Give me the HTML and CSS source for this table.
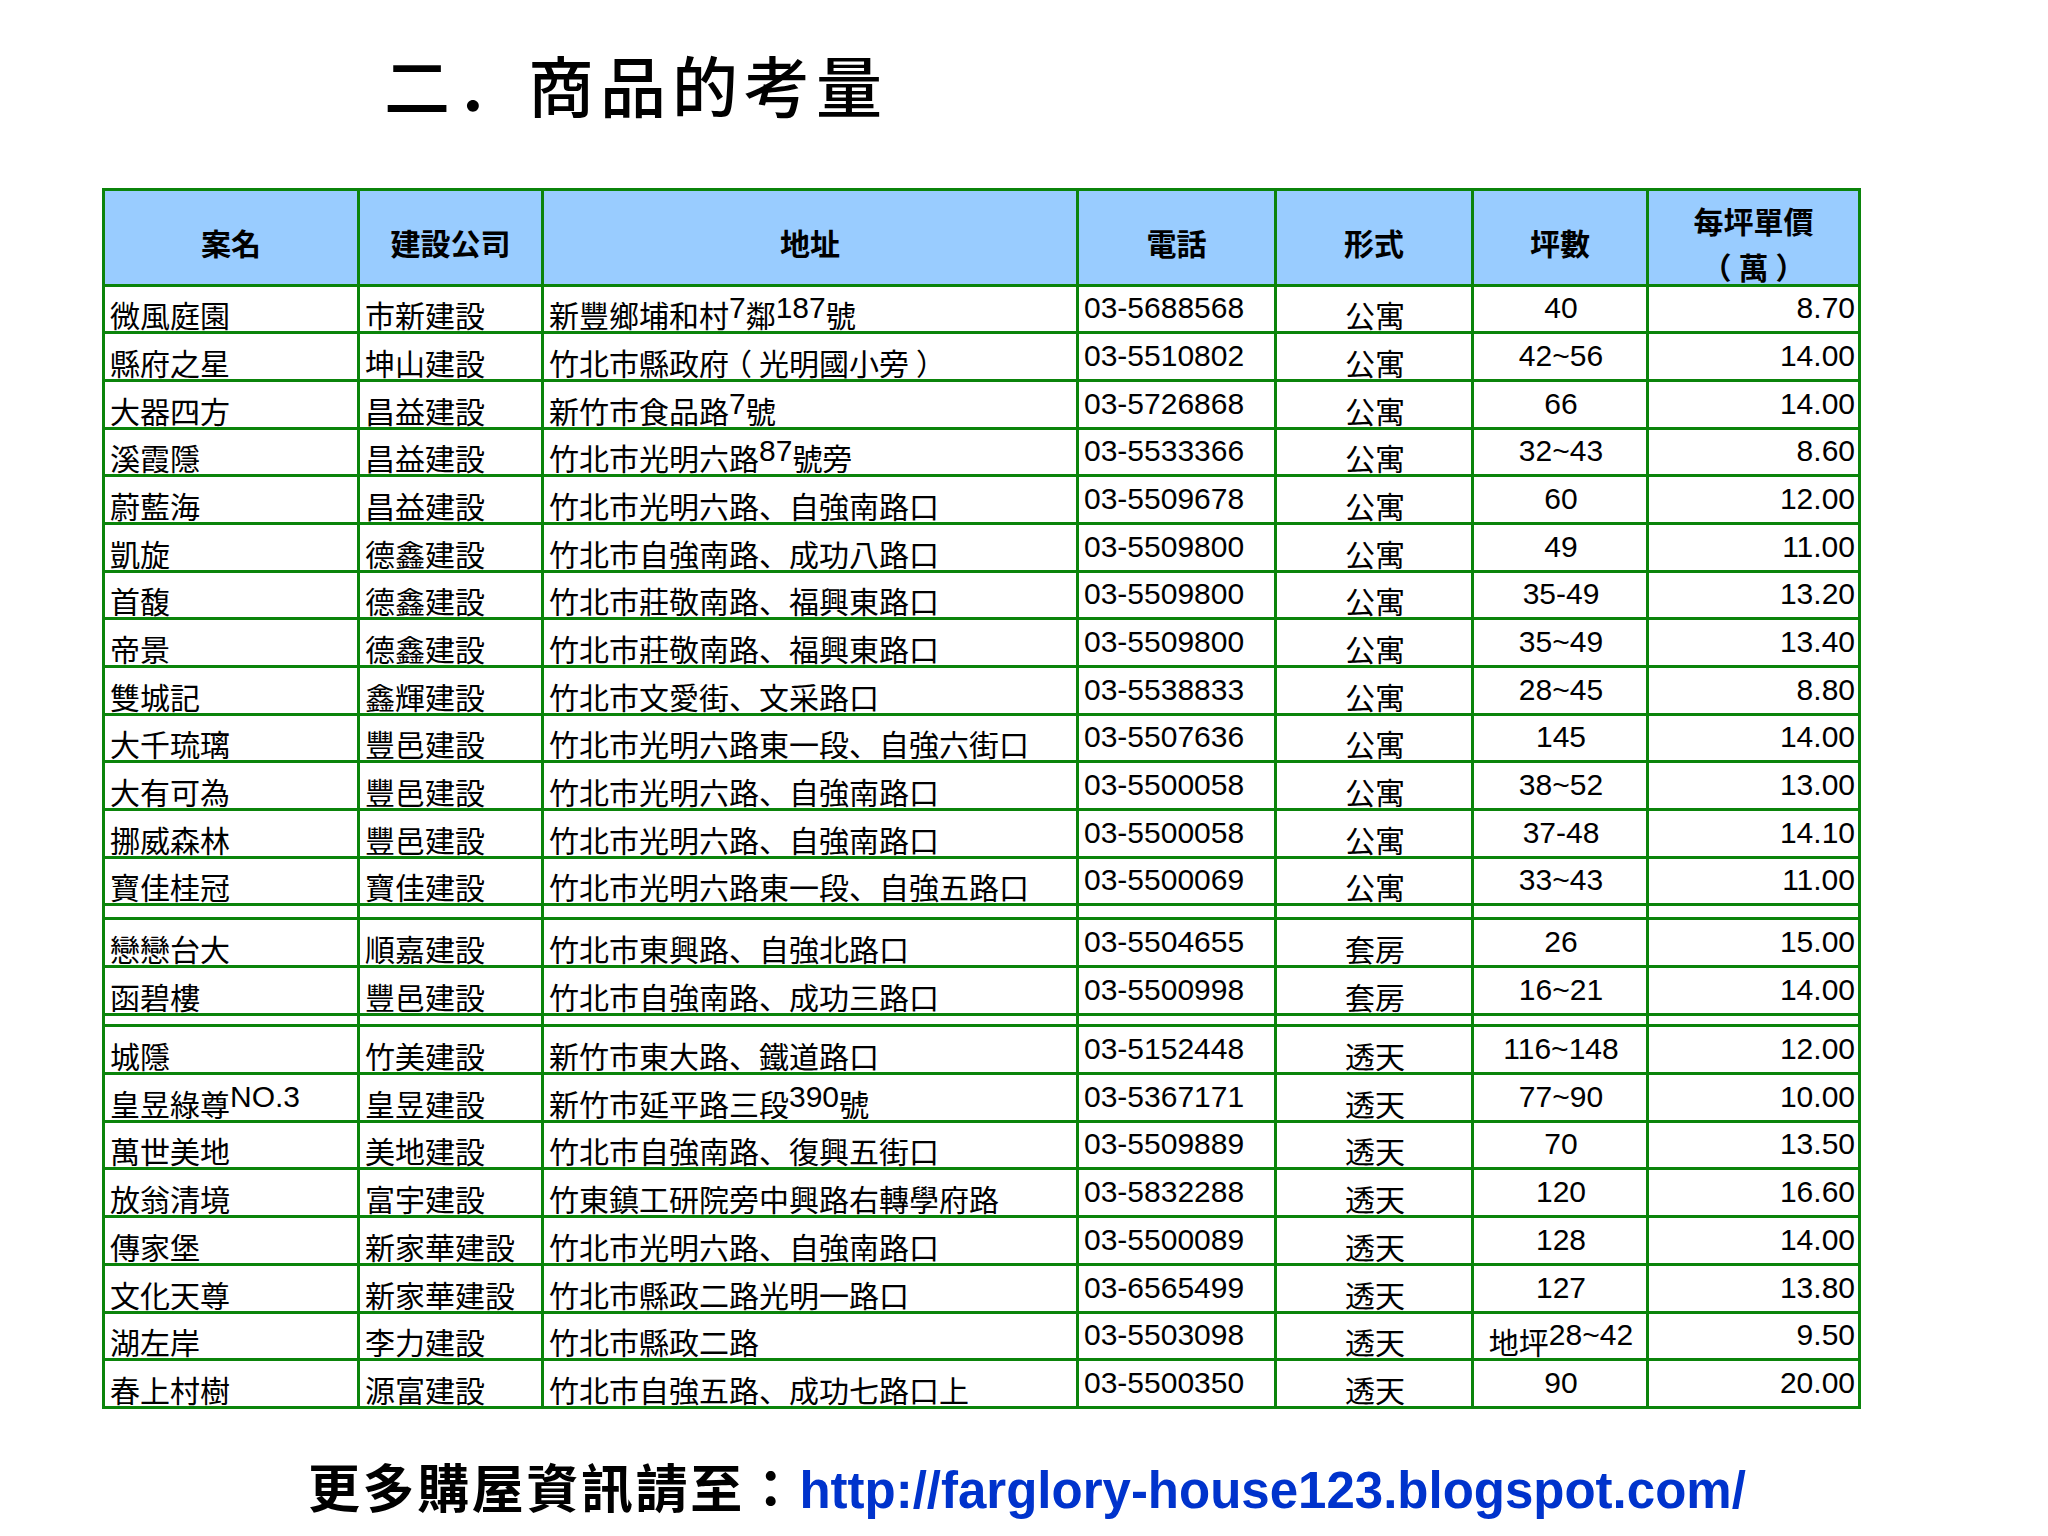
FILE: index.html
```html
<!DOCTYPE html>
<html lang="zh-Hant">
<head>
<meta charset="utf-8">
<title>商品的考量</title>
<link rel="stylesheet" href="styles.css">
</head>
<body>
<div class="page">
  <h1 class="title" lang="ja">二．商品的考量</h1>
  <table class="grid" lang="ja">
    <colgroup>
      <col class="c-name"><col class="c-co"><col class="c-addr"><col class="c-tel"><col class="c-type"><col class="c-size"><col class="c-price">
    </colgroup>
    <thead>
      <tr class="head">
        <th><div class="hd">案名</div></th>
        <th><div class="hd">建設公司</div></th>
        <th><div class="hd">地址</div></th>
        <th><div class="hd">電話</div></th>
        <th><div class="hd">形式</div></th>
        <th><div class="hd">坪數</div></th>
        <th><div class="hd two">每坪單價<br><span class="po">（</span>萬<span class="pc">）</span></div></th>
      </tr>
    </thead>
    <tbody>
      <tr class="r"><td>微風庭園</td><td>市新建設</td><td>新豐鄉埔和村<span class="n">7</span>鄰<span class="n">187</span>號</td><td class="num">03-5688568</td><td class="ctr">公寓</td><td class="num ctr">40</td><td class="num rt">8.70</td></tr>
      <tr class="r"><td>縣府之星</td><td>坤山建設</td><td>竹北市縣政府<span class="po">（</span>光明國小旁<span class="pc">）</span></td><td class="num">03-5510802</td><td class="ctr">公寓</td><td class="num ctr">42~56</td><td class="num rt">14.00</td></tr>
      <tr class="r"><td>大器四方</td><td>昌益建設</td><td>新竹市食品路<span class="n">7</span>號</td><td class="num">03-5726868</td><td class="ctr">公寓</td><td class="num ctr">66</td><td class="num rt">14.00</td></tr>
      <tr class="r"><td>溪霞隱</td><td>昌益建設</td><td>竹北市光明六路<span class="n">87</span>號旁</td><td class="num">03-5533366</td><td class="ctr">公寓</td><td class="num ctr">32~43</td><td class="num rt">8.60</td></tr>
      <tr class="r"><td>蔚藍海</td><td>昌益建設</td><td>竹北市光明六路、自強南路口</td><td class="num">03-5509678</td><td class="ctr">公寓</td><td class="num ctr">60</td><td class="num rt">12.00</td></tr>
      <tr class="r"><td>凱旋</td><td>德鑫建設</td><td>竹北市自強南路、成功八路口</td><td class="num">03-5509800</td><td class="ctr">公寓</td><td class="num ctr">49</td><td class="num rt">11.00</td></tr>
      <tr class="r"><td>首馥</td><td>德鑫建設</td><td>竹北市莊敬南路、福興東路口</td><td class="num">03-5509800</td><td class="ctr">公寓</td><td class="num ctr">35-49</td><td class="num rt">13.20</td></tr>
      <tr class="r"><td>帝景</td><td>德鑫建設</td><td>竹北市莊敬南路、福興東路口</td><td class="num">03-5509800</td><td class="ctr">公寓</td><td class="num ctr">35~49</td><td class="num rt">13.40</td></tr>
      <tr class="r"><td>雙城記</td><td>鑫輝建設</td><td>竹北市文愛街、文采路口</td><td class="num">03-5538833</td><td class="ctr">公寓</td><td class="num ctr">28~45</td><td class="num rt">8.80</td></tr>
      <tr class="r"><td>大千琉璃</td><td>豐邑建設</td><td>竹北市光明六路東一段、自強六街口</td><td class="num">03-5507636</td><td class="ctr">公寓</td><td class="num ctr">145</td><td class="num rt">14.00</td></tr>
      <tr class="r"><td>大有可為</td><td>豐邑建設</td><td>竹北市光明六路、自強南路口</td><td class="num">03-5500058</td><td class="ctr">公寓</td><td class="num ctr">38~52</td><td class="num rt">13.00</td></tr>
      <tr class="r"><td>挪威森林</td><td>豐邑建設</td><td>竹北市光明六路、自強南路口</td><td class="num">03-5500058</td><td class="ctr">公寓</td><td class="num ctr">37-48</td><td class="num rt">14.10</td></tr>
      <tr class="r"><td>寶佳桂冠</td><td>寶佳建設</td><td>竹北市光明六路東一段、自強五路口</td><td class="num">03-5500069</td><td class="ctr">公寓</td><td class="num ctr">33~43</td><td class="num rt">11.00</td></tr>
      <tr class="sp1"><td></td><td></td><td></td><td></td><td></td><td></td><td></td></tr>
      <tr class="r2"><td>戀戀台大</td><td>順嘉建設</td><td>竹北市東興路、自強北路口</td><td class="num">03-5504655</td><td class="ctr">套房</td><td class="num ctr">26</td><td class="num rt">15.00</td></tr>
      <tr class="r2"><td>函碧樓</td><td>豐邑建設</td><td>竹北市自強南路、成功三路口</td><td class="num">03-5500998</td><td class="ctr">套房</td><td class="num ctr">16~21</td><td class="num rt">14.00</td></tr>
      <tr class="sp2"><td></td><td></td><td></td><td></td><td></td><td></td><td></td></tr>
      <tr class="r"><td>城隱</td><td>竹美建設</td><td>新竹市東大路、鐵道路口</td><td class="num">03-5152448</td><td class="ctr">透天</td><td class="num ctr">116~148</td><td class="num rt">12.00</td></tr>
      <tr class="r"><td>皇昱綠尊<span class="n">NO.3</span></td><td>皇昱建設</td><td>新竹市延平路三段<span class="n">390</span>號</td><td class="num">03-5367171</td><td class="ctr">透天</td><td class="num ctr">77~90</td><td class="num rt">10.00</td></tr>
      <tr class="r"><td>萬世美地</td><td>美地建設</td><td>竹北市自強南路、復興五街口</td><td class="num">03-5509889</td><td class="ctr">透天</td><td class="num ctr">70</td><td class="num rt">13.50</td></tr>
      <tr class="r"><td>放翁清境</td><td>富宇建設</td><td>竹東鎮工研院旁中興路右轉學府路</td><td class="num">03-5832288</td><td class="ctr">透天</td><td class="num ctr">120</td><td class="num rt">16.60</td></tr>
      <tr class="r"><td>傳家堡</td><td>新家華建設</td><td>竹北市光明六路、自強南路口</td><td class="num">03-5500089</td><td class="ctr">透天</td><td class="num ctr">128</td><td class="num rt">14.00</td></tr>
      <tr class="r"><td>文化天尊</td><td>新家華建設</td><td>竹北市縣政二路光明一路口</td><td class="num">03-6565499</td><td class="ctr">透天</td><td class="num ctr">127</td><td class="num rt">13.80</td></tr>
      <tr class="r"><td>湖左岸</td><td>李力建設</td><td>竹北市縣政二路</td><td class="num">03-5503098</td><td class="ctr">透天</td><td class="ctr">地坪<span class="n">28~42</span></td><td class="num rt">9.50</td></tr>
      <tr class="r"><td>春上村樹</td><td>源富建設</td><td>竹北市自強五路、成功七路口上</td><td class="num">03-5500350</td><td class="ctr">透天</td><td class="num ctr">90</td><td class="num rt">20.00</td></tr>
    </tbody>
  </table>
  <p class="foot">更多購屋資訊請至：<span class="url">http://farglory-house123.blogspot.com/</span></p>
</div>
</body>
</html>
```

FILE: styles.css
```css
html, body {
  margin: 0;
  padding: 0;
  background: #ffffff;
}

body {
  width: 2048px;
  height: 1536px;
  overflow: hidden;
  font-family: "Noto Sans CJK TC", "Liberation Sans", sans-serif;
  color: #000000;
}

.page {
  padding-top: 50px;
}

.title {
  margin: 0 0 72px 0;
  padding-left: 384px;
  height: 66px;
  font-family: "Noto Sans CJK JP", "Noto Sans CJK TC", sans-serif;
  font-size: 66px;
  line-height: 66px;
  font-weight: 500;
  letter-spacing: 6px;
  white-space: nowrap;
}

.grid {
  margin-left: 102px;
  width: 1759px;
  table-layout: fixed;
  border-collapse: separate;
  border-spacing: 0;
  border-top: 3px solid #0b840b;
  border-left: 3px solid #0b840b;
  font-family: "Noto Sans CJK JP", "Noto Sans CJK TC", sans-serif;
}

.c-name  { width: 255px; }
.c-co    { width: 184px; }
.c-addr  { width: 535px; }
.c-tel   { width: 198px; }
.c-type  { width: 197px; }
.c-size  { width: 175px; }
.c-price { width: 212px; }

.head { height: 95.5px; }
.r    { height: 47.7px; }
.r2   { height: 48.1px; }
.sp1  { height: 13.5px; }
.sp2  { height: 11.3px; }

th, td {
  border-right: 3px solid #0b840b;
  border-bottom: 3px solid #0b840b;
  font-size: 30px;
  line-height: 30px;
  white-space: nowrap;
}

th {
  padding: 0;
  background: #99ccff;
  font-weight: 700;
  text-align: center;
  vertical-align: top;
}

.hd {
  height: 92.5px;
  box-sizing: border-box;
  padding-top: 33px;
  line-height: 36px;
}

.hd.two {
  padding-top: 6px;
  line-height: 46px;
}

td {
  padding: 0 3px 2px 5px;
  font-weight: 400;
  text-align: left;
  vertical-align: bottom;
}

td.num {
  font-family: "Liberation Sans", Arial, sans-serif;
  padding-bottom: 8px;
}

td.ctr { text-align: center; }
td.rt  { text-align: right; }

.n {
  font-family: "Liberation Sans", Arial, sans-serif;
  vertical-align: 9px;
}

/* full-width parentheses set half-width and padded, so the glyph sits centred in its cell */
.po, .pc {
  font-feature-settings: "halt" 1;
  padding: 0 7px 0 8px;
}

.pc {
  padding: 0 8px 0 7px;
}

.foot {
  margin: 47px 0 0 0;
  padding-left: 308px;
  font-size: 52px;
  line-height: 60px;
  font-weight: 700;
  letter-spacing: 2.6px;
  white-space: nowrap;
}

.foot .url {
  font-family: "Liberation Sans", Arial, sans-serif;
  font-size: 51px;
  letter-spacing: 0;
  color: #0033cc;
}
```
